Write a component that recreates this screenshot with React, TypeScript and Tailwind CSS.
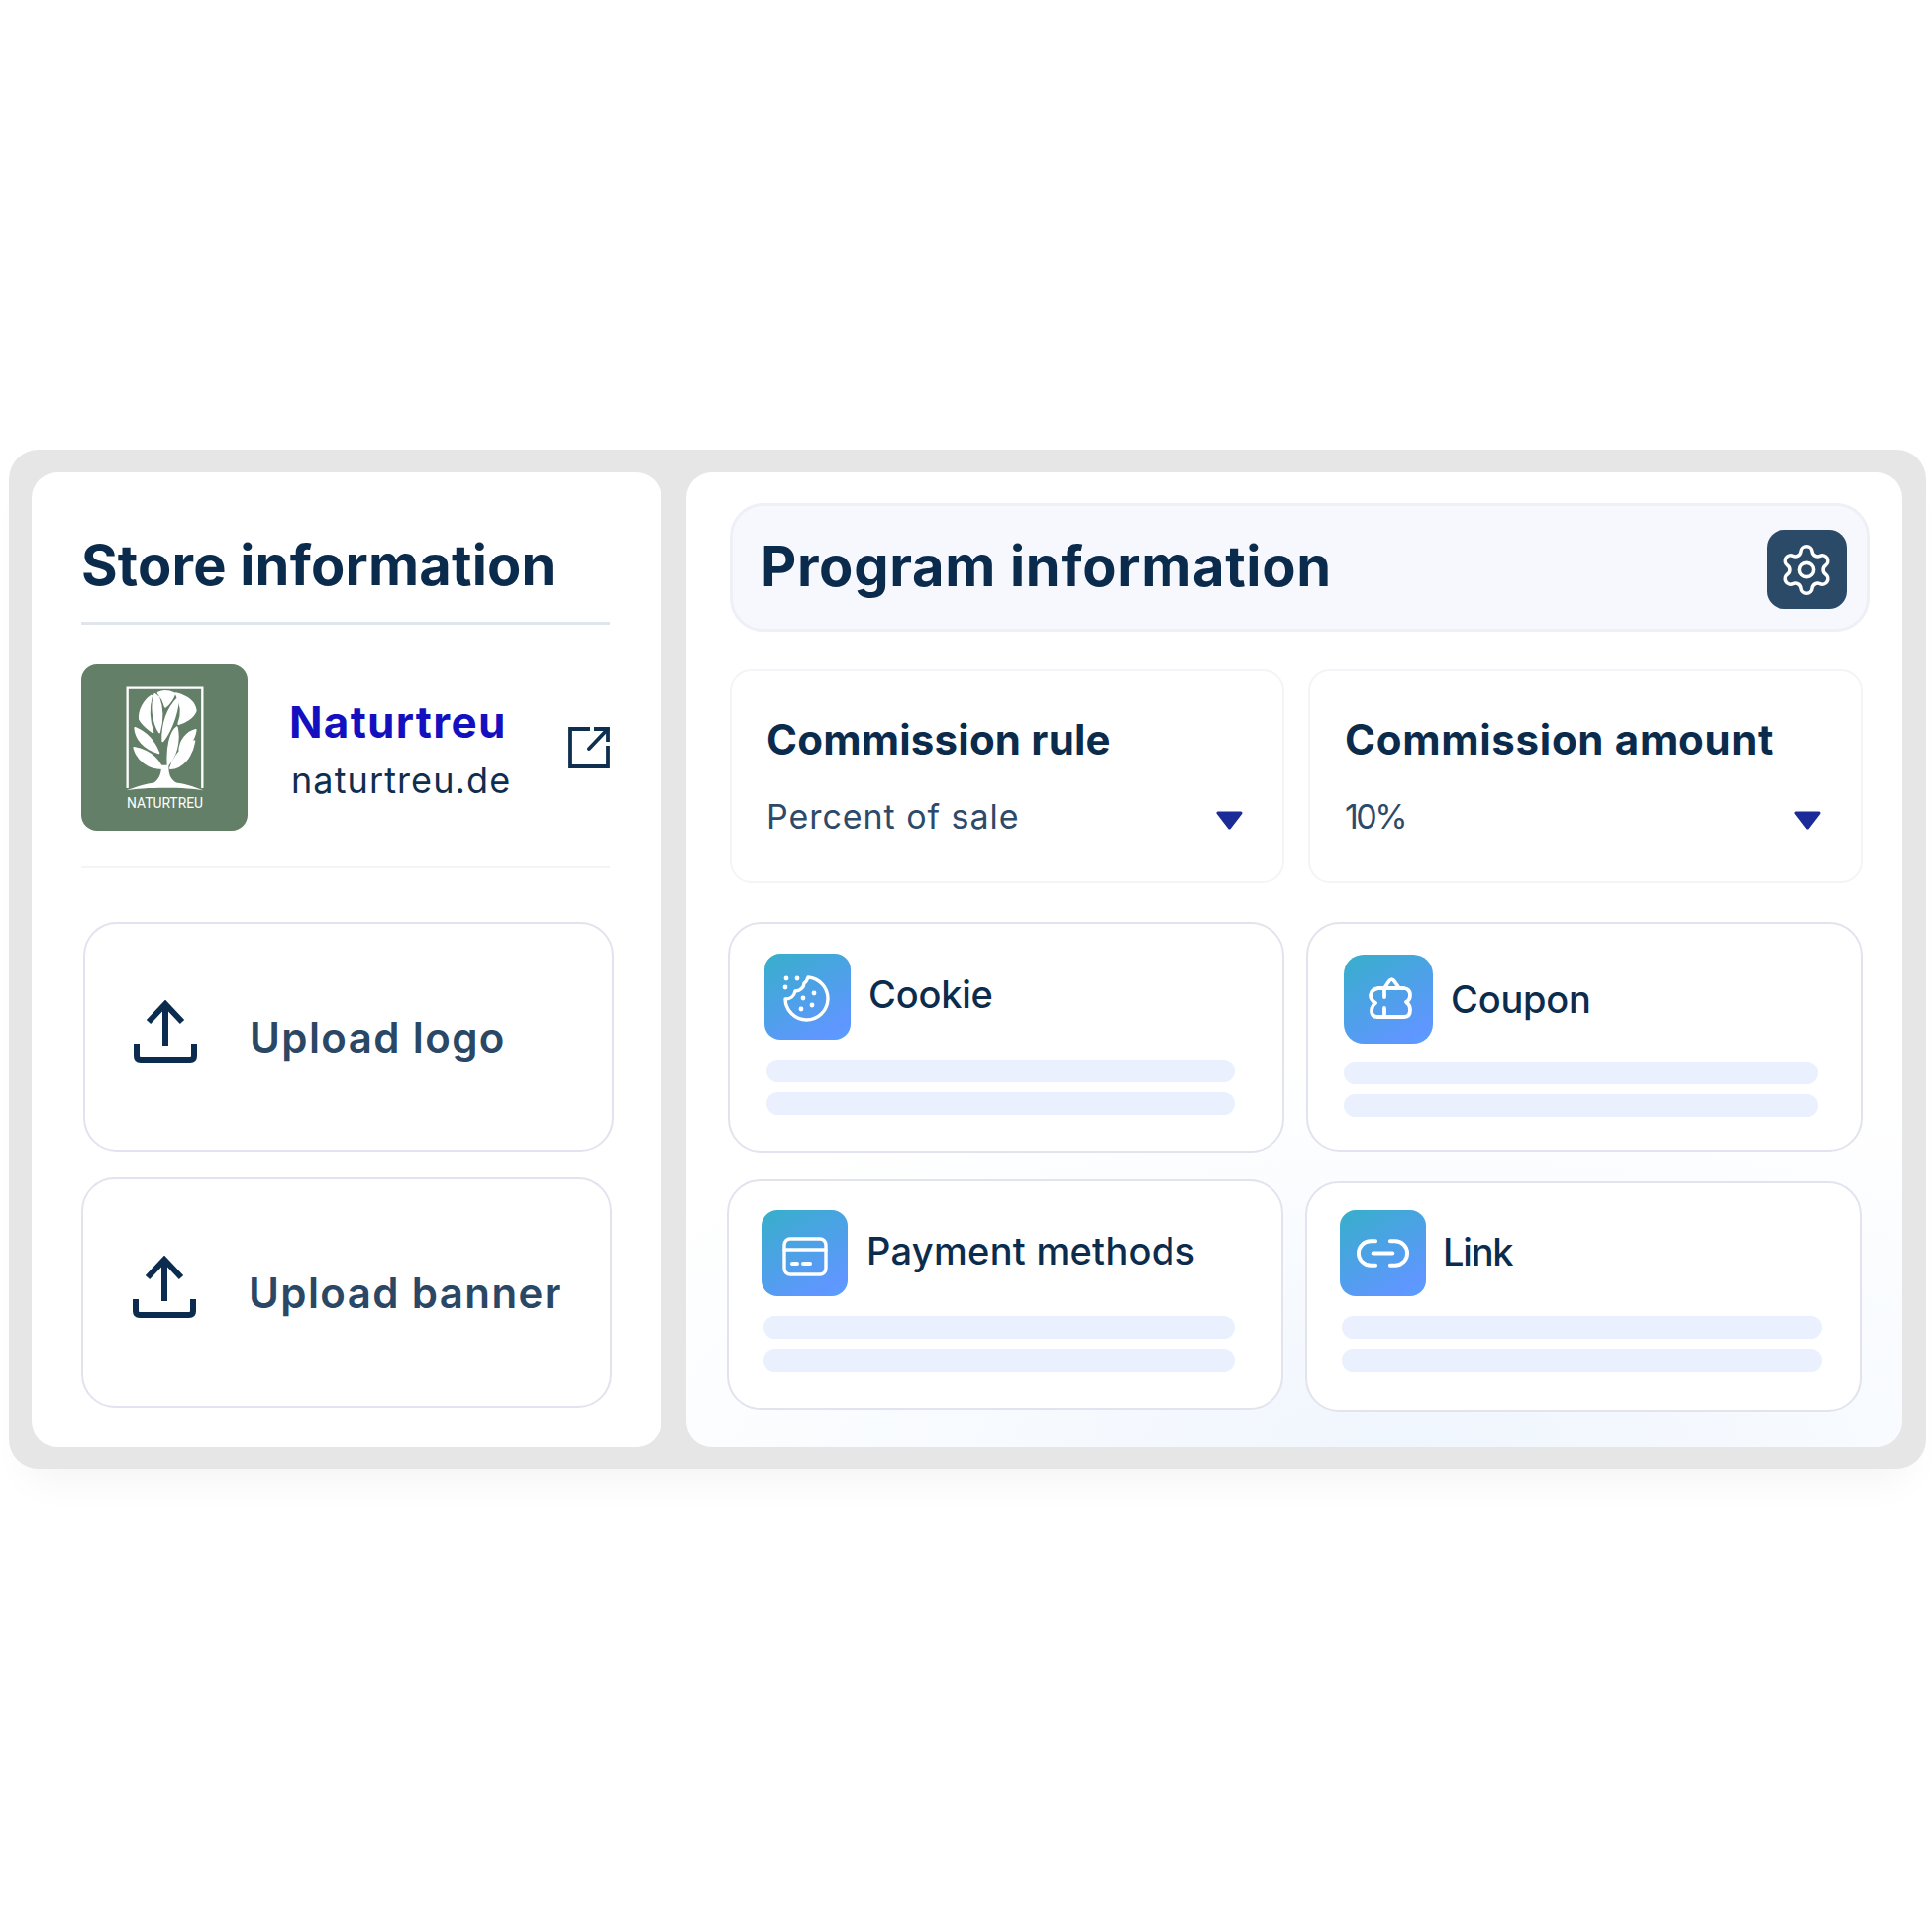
import { Link2, Settings } from 'lucide-react';
import type { ReactNode } from 'react';

const font = { fontFamily: 'Inter, "Noto Sans", sans-serif' };

function UploadIcon() {
  return (
    <svg width="64" height="63" viewBox="0 0 64 63" fill="none" stroke="#0b2b4f" strokeWidth="6" className="mb-[12px] shrink-0">
      <path d="M32 46V4" />
      <path d="M15 22L32 4L49 22" />
      <path d="M3 44V56Q3 60 7 60H57Q61 60 61 56V44" />
    </svg>
  );
}

function ExternalIcon() {
  return (
    <svg width="42" height="42" viewBox="0 0 42 42" fill="none" stroke="#0f2f50" strokeWidth="3.800" className="shrink-0">
      <path d="M22 2H2V40H40V19" />
      <path d="M21 22L40 2" strokeLinecap="round" />
      <path d="M26 2H40V15" />
    </svg>
  );
}

function Caret() {
  return (
    <svg width="27" height="19" viewBox="0 0 27 19" className="mt-[6px] shrink-0">
      <path d="M2 2H25L13.500 17Z" fill="#1b2b98" stroke="#1b2b98" strokeWidth="3" strokeLinejoin="round" />
    </svg>
  );
}

function TreeLogo() {
  return (
    <svg width="168" height="168" viewBox="0 0 168 168" className="shrink-0">
      {/* coordinates below follow a 3x crop of the logo */}
      <g transform="translate(-11.670 -10) scale(0.3333)" fill="#fff">
        <path d="M175 405V101H402V405" fill="none" stroke="#fff" strokeWidth="7" />
        <g stroke="#fff" strokeWidth="6" strokeLinejoin="round">
          <path d="M248 125C225 140 210 170 212 195C222 215 240 225 252 235C240 200 238 160 248 125Z" />
          <path d="M258 120C248 150 250 200 272 235C280 205 285 170 270 130Z" />
          <path d="M268 116C285 108 300 110 318 118C312 135 300 150 290 158C285 140 278 128 268 116Z" />
          <path d="M330 130C300 160 280 200 282 262C300 240 325 190 330 130Z" />
          <path d="M322 118C350 125 378 140 382 170C375 190 350 205 330 210C342 180 340 150 322 118Z" />
          <path d="M325 220C305 235 295 280 298 335C320 310 335 265 325 220Z" />
          <path d="M382 228C355 235 335 260 333 290C355 285 378 260 382 228Z" />
          <path d="M378 262C345 272 315 310 305 345C340 345 370 310 378 262Z" />
          <path d="M198 222C200 255 225 285 270 298C255 260 230 235 198 222Z" />
          <path d="M195 282C205 320 240 345 280 345C265 310 235 290 195 282Z" />
        </g>
        <path d="M278 335H300C300 365 305 380 330 392H250C270 380 278 365 278 335Z" />
        <path d="M172 412C220 392 260 386 290 386C320 386 360 392 405 412C360 402 220 402 172 412Z" />
      </g>
      <text x="46" y="145" textLength="77" lengthAdjust="spacingAndGlyphs" fill="#fff" fontSize="14" fontFamily="Roboto, sans-serif">NATURTREU</text>
    </svg>
  );
}

function CookieGlyph() {
  return (
    <svg width="87" height="87" viewBox="0 0 87 87" fill="none" stroke="#fff" strokeWidth="3.400" strokeLinecap="round" strokeLinejoin="round">
      <path d="M44 24A21.500 21.500 0 1 1 21 46C26 46 30 43 31 38C36 38 40 34 40 30C42 29 43 27 44 24Z" />
      <g fill="#fff" stroke="none">
        <circle cx="22" cy="25" r="2.400" />
        <circle cx="33" cy="25" r="2.400" />
        <circle cx="21" cy="34" r="2.400" />
        <circle cx="39" cy="45" r="2.400" />
        <circle cx="50" cy="40" r="2.400" />
        <circle cx="48" cy="52" r="2.400" />
        <circle cx="37" cy="56" r="2.400" />
      </g>
    </svg>
  );
}

function PuzzleGlyph() {
  return (
    <svg width="90" height="90" viewBox="0 0 90 90" fill="none" stroke="#fff" strokeWidth="3.800" strokeLinecap="round" strokeLinejoin="round">
      <path d="M35 34H41L45 28Q48 23 51 27L56 34H61Q67 35 67 41Q67 46 63 48Q67 51 67 56Q67 63 61 63H34Q28 63 28 57Q28 52 32 49Q27 46 27 41Q28 35 35 34Z" />
      <path d="M41 34V43M41 54V63M41 34H56" />
    </svg>
  );
}

function CardGlyph() {
  return (
    <svg width="87" height="87" viewBox="0 0 87 87" fill="none" stroke="#fff" strokeWidth="3.400" strokeLinecap="round" strokeLinejoin="round">
      <rect x="23" y="29" width="42" height="36" rx="6" />
      <path d="M23 40H65" />
      <path d="M31 54H36M42 54H49" strokeWidth="4" />
    </svg>
  );
}

const FEATURES: { label: string; icon: ReactNode; box: string; card: string; text: string; bars: string }[] = [
  {
    label: 'Cookie',
    icon: <CookieGlyph />,
    box: 'w-[87px] h-[87px] rounded-[16px]',
    card: 'ml-[42px] h-[233px] pl-[35px] pt-[30px]',
    text: 'ml-[18px] pb-[4px] -tracking-[0.2px]',
    bars: 'mt-[20px] ml-[2px] w-[473px]',
  },
  {
    label: 'Coupon',
    icon: <PuzzleGlyph />,
    box: 'w-[90px] h-[90px] rounded-[20px]',
    card: 'h-[232px] pl-[36px] pt-[31px]',
    text: 'ml-[18px] -tracking-[0.2px]',
    bars: 'mt-[18px] w-[479px]',
  },
  {
    label: 'Payment methods',
    icon: <CardGlyph />,
    box: 'w-[87px] h-[87px] rounded-[16px]',
    card: 'ml-[41px] mt-[27px] h-[233px] pl-[33px] pt-[29px]',
    text: 'ml-[19px] pb-[4px] tracking-[0.3px]',
    bars: 'mt-[20px] ml-[2px] w-[476px]',
  },
  {
    label: 'Link',
    icon: <Link2 size={59} strokeWidth={1.6} color="#fff" />,
    box: 'w-[87px] h-[87px] rounded-[16px]',
    card: 'mt-[29px] h-[233px] -ml-[1px] pl-[33px] pt-[27px]',
    text: 'ml-[17px] pb-[2px] -tracking-[1.2px]',
    bars: 'mt-[20px] ml-[2px] w-[485px]',
  },
];

function FeatureCard({ label, icon, box, card, text, bars }: (typeof FEATURES)[number]) {
  return (
    <div className={`w-[562px] rounded-[34px] border-2 border-[#e3e3ef] bg-white ${card}`}>
      <div className="flex items-center">
        <div className={`flex items-center justify-center bg-[linear-gradient(150deg,#37afca_0%,#5f96ff_85%,#58a0ff_100%)] ${box}`}>
          {icon}
        </div>
        <span className={`text-[38px] font-medium text-[#0c2c4e] ${text}`}>{label}</span>
      </div>
      <div className={`flex flex-col gap-[10px] ${bars}`}>
        <div className="h-[23px] rounded-full bg-[#eaf0fd]" />
        <div className="h-[23px] rounded-full bg-[#eaf0fd]" />
      </div>
    </div>
  );
}

function CommissionCard({ title, value, titleClass, valueClass }: { title: string; value: string; titleClass: string; valueClass: string }) {
  return (
    <div className="h-[216px] w-[560px] rounded-[22px] border-2 border-[#f3f4f8] bg-white pl-[35px] pr-[40px] pt-[39px]">
      <h3 className={`text-[42px] font-bold leading-[60px] text-[#0b2b4d] ${titleClass}`}>{title}</h3>
      <div className="mt-[25px] flex items-center justify-between">
        <span className={`text-[34px] leading-[46px] text-[#2d4a6a] ${valueClass}`}>{value}</span>
        <Caret />
      </div>
    </div>
  );
}

function UploadCard({ label, className }: { label: string; className: string }) {
  return (
    <div className={`flex w-[536px] items-center rounded-[34px] border-2 border-[#e3e3ef] bg-white ${className}`}>
      <UploadIcon />
      <span className="ml-[53px] text-[42px] font-semibold tracking-[1.4px] text-[#2a4766]">{label}</span>
    </div>
  );
}

export default function App() {
  return (
    <div style={font} className="min-h-[1950px] bg-white pt-[454px] pl-[9px]">
      <div className="flex h-[1029px] w-[1936px] gap-[25px] rounded-[30px] bg-[#e6e6e7] pl-[23px] pt-[23px] shadow-[0_30px_40px_-20px_rgba(0,0,0,0.05)]">
        {/* Store column */}
        <div className="h-[984px] w-[636px] rounded-[26px] bg-white pl-[50px] pt-[64px]">
          <h2 className="text-[56px] font-bold leading-[60px] tracking-[0.2px] text-[#0b2b4d]">Store information</h2>
          <div className="mt-[27px] h-[3px] w-[534px] bg-[#dfe5ea]" />
          <div className="mt-[40px] flex w-[534px] items-center">
            <div className="h-[168px] w-[168px] shrink-0 rounded-[16px] bg-[#647f68]">
              <TreeLogo />
            </div>
            <div className="ml-[42px] mt-[5px] flex-1">
              <div className="text-[44px] font-bold leading-[52px] tracking-[1.3px] text-[#1510bf]">Naturtreu</div>
              <div className="mt-[8px] ml-[2px] text-[36px] leading-[50px] tracking-[1.1px] text-[#0f2d4e]">naturtreu.de</div>
            </div>
            <ExternalIcon />
          </div>
          <div className="mt-[36px] h-[2px] w-[534px] bg-[#f3f4f6]" />
          <UploadCard label="Upload logo" className="mt-[54px] ml-[2px] h-[232px] pl-[49px]" />
          <UploadCard label="Upload banner" className="mt-[26px] h-[233px] pl-[50px]" />
        </div>

        {/* Program column */}
        <div className="h-[984px] w-[1228px] rounded-[26px] bg-[radial-gradient(ellipse_75%_40%_at_60%_100%,#f0f6fe_0%,#ffffff_100%)] pt-[31px]">
          <div className="ml-[44px] flex h-[130px] w-[1151px] items-center justify-between rounded-[34px] border-[3px] border-[#eeeff7] bg-[#f7f8fe] pl-[28px] pr-[20px]">
            <h2 className="pb-[2px] text-[56px] font-bold tracking-[0.7px] text-[#0b2b4d]">Program information</h2>
            <div className="mt-[4px] flex h-[80px] w-[81px] items-center justify-center rounded-[18px] bg-[#2a4a67]">
              <Settings size={57} strokeWidth={1.5} color="#fff" />
            </div>
          </div>
          <div className="ml-[44px] mt-[38px] flex gap-[24px]">
            <CommissionCard title="Commission rule" value="Percent of sale" titleClass="tracking-[0.2px]" valueClass="tracking-[0.95px]" />
            <CommissionCard title="Commission amount" value="10%" titleClass="tracking-[0.7px]" valueClass="-tracking-[2.5px]" />
          </div>
          <div className="mt-[39px] grid grid-cols-[626px_562px]">
            {FEATURES.map((f) => (
              <FeatureCard key={f.label} {...f} />
            ))}
          </div>
        </div>
      </div>
    </div>
  );
}
